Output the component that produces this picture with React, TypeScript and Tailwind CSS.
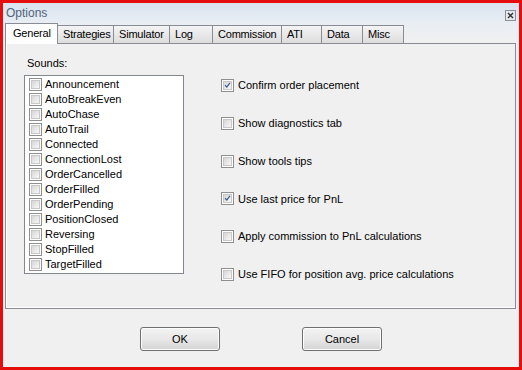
import React from 'react';

const sounds = [
  'Announcement',
  'AutoBreakEven',
  'AutoChase',
  'AutoTrail',
  'Connected',
  'ConnectionLost',
  'OrderCancelled',
  'OrderFilled',
  'OrderPending',
  'PositionClosed',
  'Reversing',
  'StopFilled',
  'TargetFilled',
];

const tabs = [
  { label: 'General', w: 'w-[53px]' },
  { label: 'Strategies', w: 'w-[57px]' },
  { label: 'Simulator', w: 'w-[57px]' },
  { label: 'Log', w: 'w-[44px]' },
  { label: 'Commission', w: 'w-[70px]' },
  { label: 'ATI', w: 'w-[41px]' },
  { label: 'Data', w: 'w-[42px]' },
  { label: 'Misc', w: 'w-[42px]' },
];

const options = [
  { label: 'Confirm order placement', checked: true },
  { label: 'Show diagnostics tab', checked: false },
  { label: 'Show tools tips', checked: false },
  { label: 'Use last price for PnL', checked: true },
  { label: 'Apply commission to PnL calculations', checked: false },
  { label: 'Use FIFO for position avg. price calculations', checked: false },
];

const CheckBox: React.FC<{ checked?: boolean }> = ({ checked }) => (
  <div className="w-[13px] h-[13px] shrink-0 border border-[#8f8f8f] bg-white p-[1px]">
    <div className="relative w-full h-full border border-[#c8c8c8] bg-gradient-to-br from-[#d6d6d6] to-[#f8f8f8]">
      {checked && (
        <svg viewBox="0 0 9 9" className="absolute inset-0 w-full h-full">
          <path d="M1.5 4.2 L3.6 6.6 L7.6 1.2" fill="none" stroke="#3a5a94" strokeWidth="1.6" />
        </svg>
      )}
    </div>
  </div>
);

const Button: React.FC<{ label: string }> = ({ label }) => (
  <button className="w-[80px] h-[24px] rounded-[3px] border border-[#707070] bg-gradient-to-b from-[#f3f3f3] via-[#e8e8e8] to-[#d4d4d4] text-[11px] text-black shadow-[inset_0_0_0_1px_#fcfcfc]">
    {label}
  </button>
);

export default function App() {
  return (
    <div
      className="w-[522px] h-[370px] bg-[#e60d0d] p-[3px]"
      style={{ fontFamily: '"Liberation Sans", Arial, sans-serif' }}
    >
      <div className="w-full h-full flex flex-col bg-[#f0f0f0]">
        <div className="h-[20px] flex items-center justify-between pl-[3px] pr-[3px] bg-gradient-to-b from-[#d9e3ee] to-[#e9eef4]">
          <span className="text-[12px] text-[#50647a]">Options</span>
          <div className="w-[11px] h-[11px] mt-[4px] border border-[#8a9098] bg-[#e4e8ec] flex items-center justify-center">
            <svg viewBox="0 0 7 7" className="w-[7px] h-[7px]">
              <path d="M1 1 L6 6 M6 1 L1 6" stroke="#333" strokeWidth="1.4" />
            </svg>
          </div>
        </div>

        <div className="h-[20px] flex items-end pl-[2px] bg-gradient-to-b from-[#e9eef4] to-[#f0f0f0]">
          {tabs.map((t, i) =>
            i === 0 ? (
              <div
                key={t.label}
                className={`${t.w} relative z-10 h-[21px] -mb-[1px] border border-b-0 border-[#898c95] bg-white text-[11px] tracking-[-0.2px] text-black flex items-center pl-[7px] pb-[1px]`}
              >
                {t.label}
              </div>
            ) : (
              <div
                key={t.label}
                className={`${t.w} h-[18px] -ml-[1px] border border-b-0 border-[#898c95] bg-gradient-to-b from-[#f4f4f4] to-[#dddddd] text-[11px] tracking-[-0.2px] text-black flex items-center pl-[5px]`}
              >
                {t.label}
              </div>
            )
          )}
        </div>

        <div className="ml-[2px] mr-[3px] h-[266px] border border-[#898c95] bg-[#f0f0f0] shadow-[inset_1px_0_0_#ffffff,inset_0_-1px_0_#ffffff] flex pl-[18px] pt-[13px]">
          <div className="w-[160px] flex flex-col">
            <div className="pl-[3px] h-[18px] text-[11px] text-black leading-[12px]">Sounds:</div>
            <div className="h-[199px] border border-[#828790] bg-white pt-[1px] pl-[4px]">
              {sounds.map((s) => (
                <div key={s} className="h-[15px] flex items-center gap-[3px] text-[11px] text-black">
                  <CheckBox />
                  <span>{s}</span>
                </div>
              ))}
            </div>
          </div>

          <div className="ml-[37px] pt-[21px] flex flex-col gap-[22.8px]">
            {options.map((o) => (
              <div key={o.label} className="h-[15px] flex items-center gap-[4px] text-[11px] text-black">
                <CheckBox checked={o.checked} />
                <span>{o.label}</span>
              </div>
            ))}
          </div>
        </div>

        <div className="flex justify-center gap-[82px] pt-[18px]">
          <Button label="OK" />
          <Button label="Cancel" />
        </div>
      </div>
    </div>
  );
}
